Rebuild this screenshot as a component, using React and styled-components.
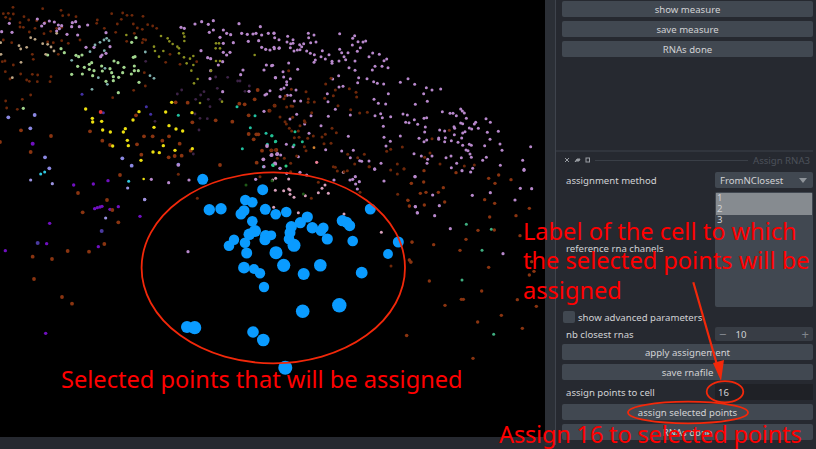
import React from "react";
import styled, { createGlobalStyle } from "styled-components";

// coordinates of the points, read from 3x crops: origin + value / 3
const LILAC = "#b888cc";
const RUST = "#8a3410";
const RUST_DIM = "#6e280a";
const layers = [
  { o: [0, 0], c: RUST_DIM, r: 1.4, p: "39,22 128,26 183,31 10,41 25,40 40,42 206,45 188,47 17,52 72,50 30,57 228,50 335,41 368,39 381,46 396,46 429,49 364,58 292,60 352,72 86,60 60,68 110,62 135,68 60,81 70,82 185,82 152,94 88,96 132,101 105,85 170,85 290,70 313,85 347,97 400,72 412,84 443,74 458,78 470,85 427,88 240,120 205,130 185,122 160,128 143,126 35,128 10,120 403,100 380,124 430,118 437,120 427,128 510,163 497,187 540,193 590,185 175,163 97,163 100,178 40,195 15,183 7,185 16,215 62,222 97,223 113,225 153,230 150,245 112,245 88,244 80,240 30,237 433,218 436,258 401,271 338,293 92,285 17,303 67,298 20,324 52,328" },
  { o: [0, 0], c: RUST, r: 1.9, p: "63,391 153,408 92,456 270,394 307,422 330,435 432,409 458,409 411,433 487,422 507,409 539,431 424,464 506,472 524,468 545,467 572,452 577,367 408,346 527,307 563,308 718,311 734,313 764,298 773,270 808,332 824,317 746,346 647,361 697,365 746,402 769,403 775,403 761,418 786,452 814,451 770,488 660,495 829,450 0,426" },
  { o: [0, 0], c: LILAC, r: 1.6, p: "112,57 148,63 163,66 133,70 125,78 28,70 5,95 36,97 175,75 185,77 178,86 170,93 217,68 227,65 215,80 238,80 263,75 201,103 233,105 318,98 282,142 258,142 318,160 330,140 306,165 302,170 640,62 605,65 585,72 543,82 553,85 625,73 640,90 628,97 670,90 717,71 660,112 680,100 692,104 670,130 700,128 742,103 725,100 759,102 768,100 781,80 785,105 805,100 822,100 776,122 745,124 785,142 797,148 810,150 822,142 837,145 603,152 623,173 632,176 670,157 690,157 680,165 655,195 668,185 799,195 815,197 792,210 729,210 722,224 826,233 630,236 632,212 668,275 747,274 800,282 795,285 792,334 840,290" },
  { o: [0, 0], c: "#3d2347", r: 1.4, p: "437,184 683,232 713,243 720,243 647,231 545,270 532,282 612,275 602,285 587,298 625,298 660,298 630,320 652,265 585,342 600,355 622,356 465,364 597,390 580,462 748,258 735,274" },
  { o: [0, 0], c: "#a2d68e", r: 1.6, p: "228,166 236,170 246,165 268,193 275,188 233,199 253,202 268,208 282,212 305,198 307,213 330,206 335,218 215,223 247,222 278,227 342,183 354,188 372,202 368,218 403,198 403,212 415,212 394,222 340,230 356,232 340,242 318,244 417,247 355,278 70,325 193,158 183,146 143,165 395,127 408,113 400,172 405,170" },
  { o: [0, 0], c: "#7fb0ad", r: 1.4, p: "215,181 270,155 285,135 300,127 312,120 320,115 327,122 313,152 436,156 450,227 462,235 295,233 322,253 276,268 315,205" },
  { o: [0, 0], c: "#ecdf10", r: 1.7, p: "257,327 277,355 278,366 305,364 308,390 331,396 370,396 376,386 338,438 382,421 385,437 417,335 399,360 462,382 507,377 528,387 548,393 497,336 515,307 576,338 490,437 525,451 459,456 478,458 423,481 577,446" },
  { o: [0, 0], c: "#8a9020", r: 1.3, p: "379,105 483,108 503,115 508,124 518,132 532,140 537,145 462,140 465,153 477,170 490,153 537,160 550,100 553,110 553,123 552,172 570,176 560,190 574,212 580,195 580,168 593,237 582,250 600,309 666,305 648,130 657,130 647,145 660,145 648,183 660,183 633,212 764,165" },
  { o: [0, 0], c: "#bda685", r: 1.4, p: "57,137 62,147 80,142 92,113 105,118 128,131 143,133 153,141 162,153 137,163 3,163 2,128 63,187 37,233 170,100" },
  { o: [0, 0], c: "#8b88e2", r: 1.9, p: "25,352 104,345 91,385 135,472 148,505 367,475 395,497 535,494" },
  { o: [0, 0], c: "#4330a4", r: 1.5, p: "246,283 310,338 439,320 452,343" },
  { o: [0, 0], c: "#7010c0", r: 2, p: "98,431" },
  { o: [0, 0], c: "#e23535", r: 1.9, p: "302,336" },
  { o: [0, 0], c: "#22c0a0", r: 1.5, p: "711,320 765,347 535,346 751,383 798,400 815,407 827,424 802,433 727,446 818,495 790,500" },
  { o: [0, 0], c: "#c08ccb", r: 1.9, p: "801,438 790,478 815,465 832,462 825,490" },
  { o: [270, 0], c: LILAC, r: 1.5, p: "12,99 14,113 27,119 53,109 69,119 51,126 62,131 69,130 101,131 89,134 95,140 115,100 116,113 132,105 122,128 138,126 13,146 28,143 61,143 72,153 82,150 90,149 110,153 121,160 133,164 136,180 132,187 157,152 153,170 166,177 177,164 186,184 186,190 207,183 209,101 254,107 248,115 247,135 264,125 279,126 287,123 271,143 209,148 215,158 234,158 262,154 222,170 227,179 255,183 297,170 308,159 328,163 342,182 350,177 315,199 336,199 354,203 307,210 255,211 237,203 8,196 56,189 39,215 83,208 17,233 41,231 61,236 50,245 50,254 42,264 33,268 206,227 188,237 266,233 263,248 291,236 311,245 322,250 341,252 391,247 414,236 434,253 469,263 486,270 512,267 461,281 472,304 436,313 355,281 312,298 325,310 347,312 207,261 219,259 172,281 174,305 196,328 175,349 241,345 315,347 332,341 337,353 362,350 399,342 412,345 433,359 462,355 470,353 407,367 417,368 443,373 466,381 464,396 447,415 391,408 340,379 342,412 361,424 348,438 517,335 540,340 549,340 559,347 572,327 577,333 583,339 589,355 572,369 578,371 617,367 613,372 648,356 661,367 685,394 652,397 598,384 605,387 625,385 585,395 578,399 552,380 554,385 509,390 524,393 553,404 575,414 526,413 506,414 506,418 524,425 544,422 564,427 578,436 598,433 604,436 644,437 660,418 690,432 696,451 782,440 758,481 762,508 691,496 649,472 638,481 608,505 588,450 594,452 600,462 604,472 574,473 560,490 528,473 543,468 486,468 473,478 471,490 454,468 432,461 333,490 297,483 241,473 269,482 275,484 215,453 250,451 167,449 117,400 153,377 104,372 80,343 123,347 235,409 60,357 49,433 69,440 85,470 32,465 20,463 3,466 17,492 30,505 314,506 544,503 470,420 462,425 73,303 92,303 62,286 52,286 78,270 0,272" },
  { o: [270, 0], c: RUST_DIM, r: 1.5, p: "56,212 183,235 167,252 196,270 238,266 258,277 260,291 190,287 164,295 204,317 242,329 269,339 292,337 108,275 64,268 46,288 42,296 115,297 114,307 133,306 50,321 63,318 68,319 13,316 0,332 125,338 30,351 45,365 49,372 68,352 103,362 105,367 90,377 58,385 65,393 85,393 73,413 87,412 113,415 130,408 156,411 166,403 186,385 199,398 162,431 183,430 108,452 103,440 62,490 80,468 43,475 15,450 5,451 22,475 233,463 263,473 283,463 254,492 297,500 196,502 382,492 402,506 350,454 362,448 397,441 480,459 464,472 486,416 538,391 510,492 583,498 613,495" },
  { o: [270, 0], c: "#22c090", r: 1.5, p: "6,407 16,425 75,395 97,425 72,435 8,495 48,498" },
  { o: [270, 0], c: "#d08030", r: 1.4, p: "132,443" },
  { o: [270, 0], c: "#ee8098", r: 1.6, p: "140,487" },
  { o: [130, 165], c: LILAC, r: 1.6, p: "64,43 116,53 177,45 44,103 174,260 377,43 145,0 402,5 450,10 530,30 510,22 470,25 612,45 660,45 668,43 688,50 676,35 677,57 682,72 734,13 762,48 855,35 856,125 862,144" },
  { o: [130, 165], c: "#d9a0bc", r: 1.5, p: "476,42 437,40 428,45 436,76 461,77 476,72 480,75 480,88 492,97 526,92 565,83 576,70 585,60 595,85 640,22 754,202 431,127 505,143 642,147" },
  { o: [130, 165], c: RUST_DIM, r: 1.5, p: "145,28 202,100 390,35 482,20 565,52 610,5 622,18 642,20 652,17 718,5 782,15 802,27 822,12 690,82 803,88 844,55 833,105 838,123 544,100 846,232 838,285 842,292 783,303 830,512" },
  { o: [130, 165], c: "#1f5a18", r: 1.5, p: "348,60 426,47 520,87" },
  { o: [130, 165], c: "#30d080", r: 1.3, p: "430,2 468,3" },
  { o: [0, 170], c: "#7010c0", r: 1.7, p: "221,45 280,42 324,32 355,110 420,139 284,116 292,113 300,111 306,109 330,118 149,160 140,221 295,230 16,242 137,490" },
  { o: [0, 170], c: "#9a92e0", r: 1.6, p: "92,30 157,41 383,54 434,89 317,144" },
  { o: [0, 170], c: "#30c8e0", r: 1.5, p: "122,12 134,6 386,34" },
  { o: [0, 170], c: "#ecdf10", r: 1.3, p: "431,27" },
  { o: [0, 170], c: RUST, r: 1.9, p: "360,15 234,69 321,90 337,120 248,127 355,157 203,243 267,245 313,222 98,260 156,267 102,327 186,381 216,401" },
  { o: [0, 170], c: "#4a3aa0", r: 2, p: "305,183 113,219" },
  { o: [400, 170], c: LILAC, r: 1.6, p: "45,20 186,2 212,6 372,1 98,75 118,107 46,110 52,128 104,137 217,76 271,68 361,55 395,56 345,90 151,176 309,251" },
  { o: [400, 170], c: "#3fae80", r: 1.5, p: "199,163 274,178 246,241 186,330 281,493" },
  { o: [400, 170], c: RUST, r: 1.7, p: "72,2 168,8 34,40 71,36 130,53 115,67 61,70 78,67 24,91 28,108 73,105 134,96 254,89 284,100 388,115 269,141 348,137 266,25 285,40 296,15 333,29 234,181 283,180 198,208 101,224 36,216 180,241 360,197 266,292 28,270 33,276 88,333 245,363 352,389 184,388 190,388 135,406 409,409 402,304 395,275 388,315 304,436 233,456 367,475 20,496 219,565" },
];

// selected points: x, y, radius
const selected = [
  [202.7,179.3,5.5],[262.7,189.7,5.5],[245.3,200,5.3],[252.3,202.3,5.3],[209.3,209.7,5.7],[221,208.7,5.7],
  [244,210.7,5.5],[241,214,5.5],[265.3,209.3,5.5],[275.7,214.3,5.3],[286.3,212,5.3],[307.3,217,5.6],
  [300.3,222.7,5.6],[291.3,226.7,5.6],[290,232.7,5.5],[312.3,227.7,5.7],[323.3,227.7,5.3],[321,230.7,5.3],
  [327.3,239,5.6],[342.3,220.7,5.6],[346.7,222.3,5.5],[349.7,225.7,5.5],[352.7,241,5.3],[370.3,209,5.5],
  [398.3,242,5.5],[388,254,4.9],[361.7,272.7,5.9],[320.3,265.3,6.3],[303.7,274,6],[283.7,265.3,6.6],
  [276,252.7,6.5],[294,245.3,6.5],[289,239,5.3],[252.3,221.3,5.3],[255,231,6],[249.3,234.3,5.8],
  [245,242.7,5.3],[234,239.7,5.2],[229,245.7,5.3],[246.7,253,5.5],[265.7,235.7,5.7],[265,239.7,5.6],
  [271.3,235.3,4.9],[244,267.7,5.9],[254,269,5],[260,273.3,5.2],[264,287,5.2],[302.7,311.3,6.8],
  [339.3,305.3,7.2],[187,327,6],[194.7,327.7,6.6],[253,332,5.8],[263.3,340,6.3],[285.3,367.7,7],
];

const GlobalStyle = createGlobalStyle`
  html, body { margin: 0; padding: 0; background: #000; }
`;

const Window = styled.div`
  position: relative;
  width: 816px;
  height: 449px;
  overflow: hidden;
  display: flex;
  background: #262930;
  font-family: "Noto Sans", "Liberation Sans", sans-serif;
  font-size: 9.6px;
  color: #d1d2d4;
`;

const Viewer = styled.div`
  width: 545px;
  flex: none;
  display: flex;
  flex-direction: column;
`;

const Canvas = styled.svg`
  display: block;
  width: 545px;
  height: 437px;
  flex: none;
  background: #000;
`;

const Splitter = styled.div`
  width: 11px;
  height: 445px;
  flex: none;
  background: #2b2f36;
  border-right: 1px solid #3f444d;
  box-sizing: border-box;
`;

const Side = styled.div`
  flex: 1;
  height: 440px;
  display: flex;
  flex-direction: column;
  overflow: hidden;
  padding-right: 3px;
`;

const TopDock = styled.div`
  height: 152px;
  flex: none;
  display: flex;
  flex-direction: column;
  gap: 4px;
  padding: 1px 0 0 6px;
  box-sizing: border-box;
  border-bottom: 2px solid #31353d;
`;

const BottomDock = styled.div`
  flex: 1;
  display: flex;
  flex-direction: column;
  padding-left: 6px;
`;

const Button = styled.div`
  height: 16px;
  flex: none;
  display: flex;
  align-items: center;
  justify-content: center;
  background: #414851;
  border-radius: 2px;
`;

const TitleBar = styled.div`
  height: 16px;
  display: flex;
  align-items: center;
  gap: 5px;
  padding: 0 3px 0 2px;
  color: #4c515a;
  flex: none;
`;

const TitleIcons = styled.svg`
  width: 26px;
  height: 8px;
  flex: none;
`;

const TitleRule = styled.div`
  flex: 1;
  height: 1px;
  background: #3a3f47;
`;

const Row = styled.div`
  display: flex;
  align-items: center;
  height: ${(p) => p.$h || 16}px;
  margin-top: ${(p) => p.$top || 0}px;
  flex: none;
`;

const Label = styled.div`
  flex: 1;
  padding-left: 4px;
  padding-bottom: ${(p) => p.$lift || 0}px;
  white-space: nowrap;
`;

const Field = styled.div`
  width: 98px;
  flex: none;
  height: 100%;
  box-sizing: border-box;
`;

const Combo = styled(Field)`
  display: flex;
  align-items: center;
  justify-content: space-between;
  padding: 0 6px 0 5px;
  background: #414851;
  border-radius: 2px;
`;

const Caret = styled.div`
  width: 0;
  height: 0;
  border-left: 4.5px solid transparent;
  border-right: 4.5px solid transparent;
  border-top: 5px solid #8f949a;
`;

const ListBox = styled(Field)`
  background: #414851;
  border-radius: 2px;
  padding: 1px;
  line-height: 10px;
`;

const ListItem = styled.div`
  padding: 0 0 1px 1px;
  background: ${(p) => (p.$selected ? "#868b90" : "transparent")};
`;

const Check = styled.div`
  width: 12px;
  height: 12px;
  background: #414851;
  border-radius: 2px;
  flex: none;
  margin: 0 3px 0 1px;
`;

const Spin = styled(Field)`
  display: flex;
  align-items: center;
  justify-content: space-between;
  padding: 0 4px;
  background: #383d45;
  border-radius: 2px;
  color: #d1d2d4;
`;

const SpinSign = styled.span`
  color: #80858c;
  font-size: 13px;
`;

const Value = styled.span`
  flex: 1;
  padding-left: 9px;
`;

const LineEdit = styled(Field)`
  display: flex;
  align-items: center;
  padding-left: 3px;
  background: #1f2126;
`;

const Stack = styled.div`
  display: flex;
  flex-direction: column;
  gap: 4px;
  margin-top: ${(p) => p.$top || 0}px;
  flex: none;
`;

const StatusBar = styled.div`
  height: 12px;
  flex: none;
  background: #262930;
`;

const Overlay = styled.svg`
  position: absolute;
  left: 0;
  top: 0;
  width: 816px;
  height: 449px;
  pointer-events: none;
`;

const Note = styled.div`
  position: absolute;
  left: ${(p) => p.$x}px;
  top: ${(p) => p.$y}px;
  color: #ff0000;
  font-family: "Noto Sans", "Liberation Sans", sans-serif;
  font-size: 23.6px;
  line-height: 29.4px;
  letter-spacing: ${(p) => p.$track || 0}px;
  white-space: pre;
`;

function Points() {
  return layers.map((l, i) => (
    <g fill={l.c} key={i}>
      {l.p.split(" ").map((pt) => {
        const [x, y] = pt.split(",").map(Number);
        return <circle key={pt} cx={l.o[0] + x / 3} cy={l.o[1] + y / 3} r={l.r} />;
      })}
    </g>
  ));
}

export default function App() {
  return (
    <Window>
      <GlobalStyle />
      <Viewer>
        <Canvas viewBox="0 0 545 437">
          <Points />
          <g fill="#0a9bff">
            {selected.map(([x, y, r]) => (
              <circle key={`${x}-${y}`} cx={x} cy={y} r={r} />
            ))}
          </g>
        </Canvas>
        <StatusBar />
      </Viewer>
      <Splitter />
      <Side>
        <TopDock>
          <Button>show measure</Button>
          <Button>save measure</Button>
          <Button>RNAs done</Button>
        </TopDock>
        <BottomDock>
          <TitleBar>
            <TitleIcons viewBox="0 0 26 8">
              <g stroke="#9a9ea4" fill="none" strokeWidth="1">
                <path d="M1 2l4 4M5 2l-4 4" />
                <path d="M11 6l2-3h3l-1 2h-3z" fill="#9a9ea4" />
                <rect x="22" y="2" width="3.5" height="4" />
              </g>
            </TitleIcons>
            <TitleRule />
            <span>Assign RNA3</span>
          </TitleBar>
          <Row $top={4}>
            <Label>assignment method</Label>
            <Combo>
              FromNClosest
              <Caret />
            </Combo>
          </Row>
          <Row $h={115} $top={4}>
            <Label $lift={3}>reference rna chanels</Label>
            <ListBox>
              <ListItem $selected>1</ListItem>
              <ListItem $selected>2</ListItem>
              <ListItem>3</ListItem>
            </ListBox>
          </Row>
          <Row $h={12} $top={4}>
            <Check />
            show advanced parameters
          </Row>
          <Row $h={14} $top={4}>
            <Label>nb closest rnas</Label>
            <Spin>
              <SpinSign>−</SpinSign>
              <Value>10</Value>
              <SpinSign>+</SpinSign>
            </Spin>
          </Row>
          <Stack $top={3}>
            <Button>apply assignement</Button>
            <Button>save rnafile</Button>
            <Row>
              <Label>assign points to cell</Label>
              <LineEdit>16</LineEdit>
            </Row>
            <Button>assign selected points</Button>
            <Button>RNAs done</Button>
          </Stack>
        </BottomDock>
      </Side>
      <Overlay viewBox="0 0 816 449">
        <g fill="none" stroke="#f2280a" strokeWidth="1.8">
          <ellipse cx="273.3" cy="267.8" rx="131.7" ry="95.5" />
          <ellipse cx="725" cy="391.7" rx="18.3" ry="10.6" />
          <ellipse cx="688" cy="412.5" rx="60" ry="10.8" />
        </g>
        <path d="M693.3 282.3L718.5 370" stroke="#f2280a" strokeWidth="2.2" fill="none" />
        <path d="M721 381L713 363L724 360Z" fill="#f2280a" />
      </Overlay>
      <Note $x={61} $y={365}>Selected points that will be assigned</Note>
      <Note $x={523} $y={217}>{"Label of the cell to which\nthe selected points will be\nassigned"}</Note>
      <Note $x={499} $y={420} $track={-0.2}>Assign 16 to selected points</Note>
    </Window>
  );
}
